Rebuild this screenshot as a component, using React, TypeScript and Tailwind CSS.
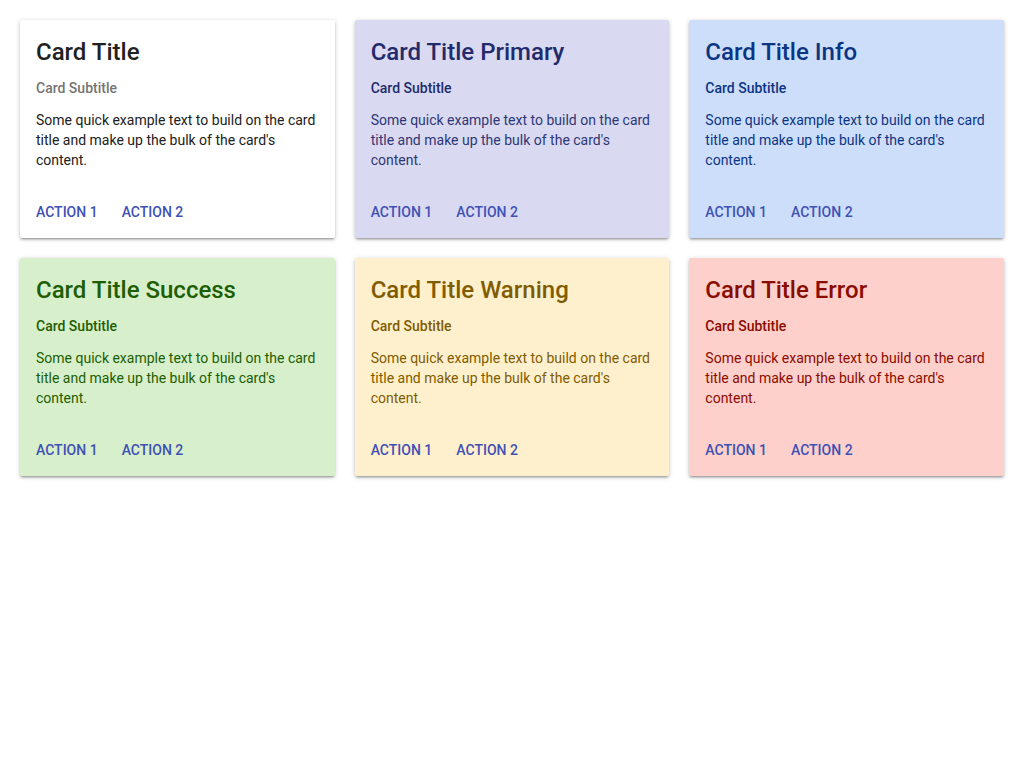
import React from 'react';

type Variant = {
    title: string;
    bg: string;
    title_cls: string;
    sub_cls: string;
    body_cls: string;
};

const cards: Variant[] = [
    { title: 'Card Title', bg: 'bg-white', title_cls: 'text-[#212121]', sub_cls: 'text-[#757575]', body_cls: 'text-[#212121]' },
    { title: 'Card Title Primary', bg: 'bg-[#d9daf1]', title_cls: 'text-[#232a6b]', sub_cls: 'text-[#232a6b]', body_cls: 'text-[#2f3675]' },
    { title: 'Card Title Info', bg: 'bg-[#cddefb]', title_cls: 'text-[#0b3583]', sub_cls: 'text-[#0b3583]', body_cls: 'text-[#0b3583]' },
    { title: 'Card Title Success', bg: 'bg-[#d7efcb]', title_cls: 'text-[#1d5e02]', sub_cls: 'text-[#1d5e02]', body_cls: 'text-[#1d5e02]' },
    { title: 'Card Title Warning', bg: 'bg-[#fff0cd]', title_cls: 'text-[#7f5c00]', sub_cls: 'text-[#7f5c00]', body_cls: 'text-[#7f5c00]' },
    { title: 'Card Title Error', bg: 'bg-[#fdd0cb]', title_cls: 'text-[#8a0c00]', sub_cls: 'text-[#8a0c00]', body_cls: 'text-[#8a0c00]' },
];

function Card({ v }: { v: Variant }) {
    return (
        <div className={`${v.bg} rounded-[2px] shadow-[0_2px_2px_0_rgba(0,0,0,0.14),0_3px_1px_-2px_rgba(0,0,0,0.12),0_1px_5px_0_rgba(0,0,0,0.2)]`}>
            {/* Content */}
            <div className="p-4">
                <h2 className={`text-2xl leading-8 font-medium ${v.title_cls}`}>{v.title}</h2>
                <div className={`mt-[10px] text-sm leading-5 font-medium ${v.sub_cls}`}>Card Subtitle</div>
                <p className={`mt-3 text-sm leading-5 ${v.body_cls}`}>
                    Some quick example text to build on the card title and make up the bulk of the card's content.
                </p>
            </div>

            {/* Actions */}
            <div className="flex gap-2 p-2">
                <button className="h-9 px-2 text-sm font-medium uppercase text-[#3f51b5] rounded">Action 1</button>
                <button className="h-9 px-2 text-sm font-medium uppercase text-[#3f51b5] rounded">Action 2</button>
            </div>
        </div>
    );
}

export default function App() {
    return (
        <div className="min-h-screen bg-white p-5" style={{ fontFamily: 'Roboto, "Liberation Sans", sans-serif' }}>
            <div className="grid grid-cols-3 gap-5">
                {cards.map((c) => (
                    <Card key={c.title} v={c} />
                ))}
            </div>
        </div>
    );
}
